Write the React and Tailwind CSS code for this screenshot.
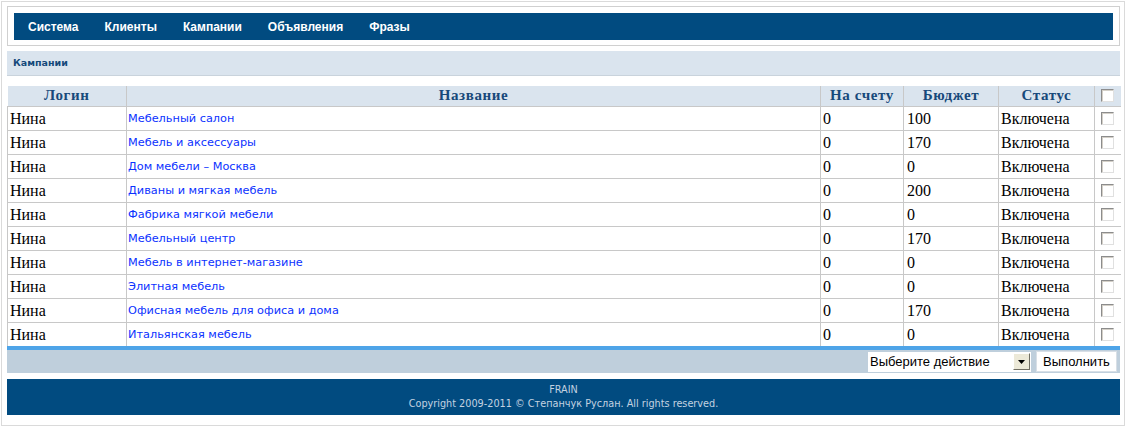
import React from 'react';

const rows = [
  ['Нина', 'Мебельный салон', '0', '100', 'Включена'],
  ['Нина', 'Мебель и аксессуары', '0', '170', 'Включена'],
  ['Нина', 'Дом мебели – Москва', '0', '0', 'Включена'],
  ['Нина', 'Диваны и мягкая мебель', '0', '200', 'Включена'],
  ['Нина', 'Фабрика мягкой мебели', '0', '0', 'Включена'],
  ['Нина', 'Мебельный центр', '0', '170', 'Включена'],
  ['Нина', 'Мебель в интернет-магазине', '0', '0', 'Включена'],
  ['Нина', 'Элитная мебель', '0', '0', 'Включена'],
  ['Нина', 'Офисная мебель для офиса и дома', '0', '170', 'Включена'],
  ['Нина', 'Итальянская мебель', '0', '0', 'Включена'],
];

const menu = ['Система', 'Клиенты', 'Кампании', 'Объявления', 'Фразы'];

const Check = () => (
  <span className="inline-block w-[13px] h-[13px] border border-t-[#8c8c8c] border-l-[#8c8c8c] border-r-[#e0e0e0] border-b-[#e0e0e0] bg-white shadow-[inset_1px_1px_0_#d4d0c8]" />
);

export default function App() {
  return (
    <div className="w-[1127px] h-[427px] bg-white pt-[1px] pl-[1px]">
      <div className="w-[1124px] h-[425px] border border-[#dadada] pl-[5px] pt-[4px]">
        {/* верхнее меню */}
        <div className="w-[1113px] border border-[#d0d0d0] pt-[6px] px-[6px] pb-[5px]">
          <div className="h-[27px] bg-[#014b80] flex items-center font-['Liberation_Sans',Arial,sans-serif] font-bold text-[12px] text-white">
            {menu.map(m => (
              <span key={m} className="px-[13px] first:pl-[14px]">{m}</span>
            ))}
          </div>
        </div>

        <div className="w-[1113px] mt-[5px]">
          <div className="h-[25px] bg-[#dae4ee] border-b border-[#c9d3dc] flex items-center pl-[6px] font-['DejaVu_Sans',Verdana,sans-serif] font-bold text-[9.5px] text-[#14497a]">
            Кампании
          </div>
          <div className="h-[10px] bg-white" />

          <table className="w-[1113px] table-fixed border-collapse font-['Liberation_Serif','Times_New_Roman',serif] text-[16px] text-black">
            <colgroup>
              <col className="w-[119px]" />
              <col className="w-[694px]" />
              <col className="w-[83px]" />
              <col className="w-[95px]" />
              <col className="w-[96px]" />
              <col className="w-[26px]" />
            </colgroup>
            <thead>
              <tr className="h-[20px] bg-[#dae4ee] text-[#17497a] font-bold text-[15px] tracking-[0.6px]">
                <th className="border-r border-[#c8c8c8] p-0 leading-[19px]">Логин</th>
                <th className="border-r border-[#c8c8c8] p-0 leading-[19px]">Название</th>
                <th className="border-r border-[#c8c8c8] p-0 leading-[19px]">На счету</th>
                <th className="border-r border-[#c8c8c8] p-0 leading-[19px]">Бюджет</th>
                <th className="border-r border-[#c8c8c8] p-0 leading-[19px]">Статус</th>
                <th className="p-0 leading-[0]"><Check /></th>
              </tr>
            </thead>
            <tbody>
              {rows.map((r, i) => (
                <tr key={i} className="h-[24px] border-t border-[#c8c8c8]">
                  <td className="border-l border-r border-[#c8c8c8] pl-[2px] py-0 leading-[23px]">{r[0]}</td>
                  <td className="border-r border-[#c8c8c8] pl-[1px] py-0 leading-[23px] font-['DejaVu_Sans',Verdana,sans-serif] text-[11.3px] text-[#0b32ff]">{r[1]}</td>
                  <td className="border-r border-[#c8c8c8] pl-[2px] py-0 leading-[23px]">{r[2]}</td>
                  <td className="border-r border-[#c8c8c8] pl-[3px] py-0 leading-[23px]">{r[3]}</td>
                  <td className="border-r border-[#c8c8c8] pl-[2px] py-0 leading-[23px]">{r[4]}</td>
                  <td className="text-center p-0 leading-[0]"><Check /></td>
                </tr>
              ))}
            </tbody>
          </table>

          {/* панель действий */}
          <div className="h-[27px] border-t-[4px] border-[#4ea4e8] bg-[#bfcfdc] flex items-center justify-end gap-[5px] pr-[3px] font-['Liberation_Sans',Arial,sans-serif] text-[13px] text-black">
            <div className="w-[163px] h-[20px] bg-white flex items-center justify-between pl-[2px] pr-[1px]">
              <span>Выберите действие</span>
              <span className="w-[17px] h-[17px] bg-[#ece9d8] border border-t-[#fff] border-l-[#fff] border-r-[#716f64] border-b-[#716f64] flex items-center justify-center">
                <svg width="7" height="4" viewBox="0 0 7 4"><path d="M0 0h7L3.5 4z" fill="#000" /></svg>
              </span>
            </div>
            <div className="w-[81px] h-[21px] bg-white border border-[#d8dfe6] flex items-center justify-center">
              Выполнить
            </div>
          </div>

          <div className="h-[6px]" />

          {/* подвал */}
          <div className="h-[36px] bg-[#014b80] flex flex-col items-center justify-center font-['DejaVu_Sans',Verdana,sans-serif] text-[9.7px] leading-[14px] text-[#c3d2e0]">
            <span>FRAIN</span>
            <span>Copyright 2009-2011 © Степанчук Руслан. All rights reserved.</span>
          </div>
        </div>
      </div>
    </div>
  );
}
